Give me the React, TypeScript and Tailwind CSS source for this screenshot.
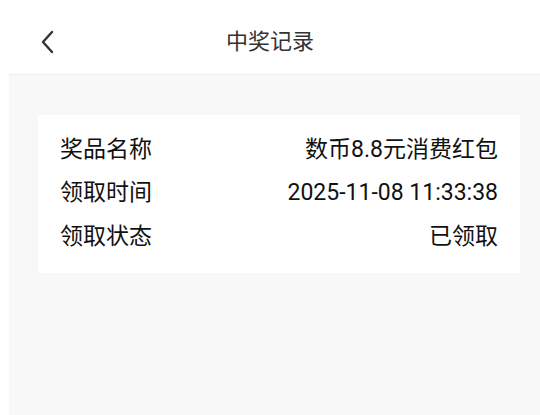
import React from 'react';

const rows = [
  { label: '奖品名称', value: '数币8.8元消费红包' },
  { label: '领取时间', value: '2025-11-08 11:33:38' },
  { label: '领取状态', value: '已领取' },
];

const App = () => {
  return (
    <div
      className="flex h-[415px] w-[540px] flex-col overflow-hidden bg-white"
      style={{ fontFamily: 'Roboto, "Noto Sans CJK SC", sans-serif' }}
    >
      {/* header */}
      <div className="relative flex h-[74px] shrink-0 items-center justify-center pt-[10px]">
        <button className="absolute left-[36px] top-[28px] flex h-[28px] w-[22px] items-center justify-center">
          <svg width="14" height="24" viewBox="0 0 14 24" fill="none">
            <path d="M12 2L3 12l9 10" stroke="#333" strokeWidth="2.4" strokeLinecap="round" strokeLinejoin="round" />
          </svg>
        </button>
        <h1 className="text-[22px] leading-none text-[#333]">中奖记录</h1>
      </div>

      {/* body */}
      <main className="ml-[9px] flex-1 border-t border-[#f0f0f0] bg-[#f8f8f8] pt-[40px] pl-[29px] pr-[20px]">
        <div className="bg-white px-[22px] pt-[13px] pb-[14px]">
          {rows.map((row) => (
            <div key={row.label} className="flex h-[43.5px] items-center justify-between text-[23px] text-[#111]">
              <span>{row.label}</span>
              <span>{row.value}</span>
            </div>
          ))}
        </div>
      </main>
    </div>
  );
};

export default App;
